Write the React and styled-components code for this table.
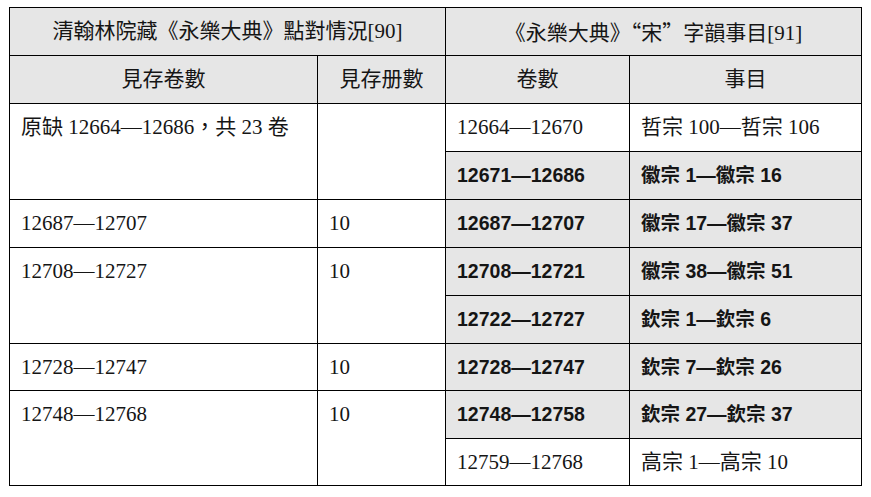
import React from "react";
import styled, { createGlobalStyle } from "styled-components";

const Global = createGlobalStyle`
  html, body { margin: 0; padding: 0; background: #ffffff; }
  body { font-family: "Liberation Serif", "Noto Sans CJK TC", serif; }
`;

const Page = styled.div`
  padding: 7px 0 0 9px;
`;

const Grid = styled.div`
  display: inline-grid;
  grid-template-columns: 307px 127px 183px 231px;
  grid-template-rows: 47px 47px 47px 47px 47px 47px 47px 46px 47px 46px;
  gap: 1px;
  padding: 1px;
  background: #000;
`;

const Cell = styled.div`
  background: ${(p) => (p.$shade ? "#e6e6e6" : "#ffffff")};
  color: #151515;
  font-family: ${(p) =>
    p.$bold
      ? `"Liberation Sans", "Noto Sans CJK TC", sans-serif`
      : `"Liberation Serif", "Noto Sans CJK TC", serif`};
  font-weight: ${(p) => (p.$bold ? 700 : 400)};
  font-size: ${(p) => (p.$bold ? "19.5px" : "21px")};
  line-height: 46px;
  padding: 0 11px;
  white-space: nowrap;
  text-align: ${(p) => (p.$center ? "center" : "left")};
  grid-column: ${(p) => p.$col || "auto"};
  grid-row: ${(p) => p.$row || "auto"};
`;

const Head = styled(Cell).attrs({ $shade: true, $center: true })`
  padding: 0;
  line-height: 47px;
`;

const Wide = styled.span`
  font-family: "Noto Sans CJK TC", sans-serif;
  font-feature-settings: "fwid" 1;
`;

const leftRows = [
  { text: "原缺 12664—12686，共 23 卷", vol: "", row: "3 / span 2" },
  { text: "12687—12707", vol: "10", row: "5 / span 1" },
  { text: "12708—12727", vol: "10", row: "6 / span 2" },
  { text: "12728—12747", vol: "10", row: "8 / span 1" },
  { text: "12748—12768", vol: "10", row: "9 / span 2" },
];

const rightRows = [
  ["12664—12670", "哲宗 100—哲宗 106", false],
  ["12671—12686", "徽宗 1—徽宗 16", true],
  ["12687—12707", "徽宗 17—徽宗 37", true],
  ["12708—12721", "徽宗 38—徽宗 51", true],
  ["12722—12727", "欽宗 1—欽宗 6", true],
  ["12728—12747", "欽宗 7—欽宗 26", true],
  ["12748—12758", "欽宗 27—欽宗 37", true],
  ["12759—12768", "高宗 1—高宗 10", false],
];

export default function App() {
  return (
    <>
      <Global />
      <Page>
        <Grid>
          <Head $col="1 / span 2" $row="1">清翰林院藏《永樂大典》點對情況[90]</Head>
          <Head $col="3 / span 2" $row="1">
            《永樂大典》<Wide>“</Wide>宋<Wide>”</Wide>字韻事目[91]
          </Head>
          <Head $col="1" $row="2">見存卷數</Head>
          <Head $col="2" $row="2">見存册數</Head>
          <Head $col="3" $row="2">卷數</Head>
          <Head $col="4" $row="2">事目</Head>
          {leftRows.map((r) => (
            <React.Fragment key={r.text}>
              <Cell $col="1" $row={r.row}>{r.text}</Cell>
              <Cell $col="2" $row={r.row}>{r.vol}</Cell>
            </React.Fragment>
          ))}
          {rightRows.map(([a, b, bold], i) => (
            <React.Fragment key={a}>
              <Cell $col="3" $row={`${i + 3}`} $bold={bold} $shade={bold}>{a}</Cell>
              <Cell $col="4" $row={`${i + 3}`} $bold={bold} $shade={bold}>{b}</Cell>
            </React.Fragment>
          ))}
        </Grid>
      </Page>
    </>
  );
}
